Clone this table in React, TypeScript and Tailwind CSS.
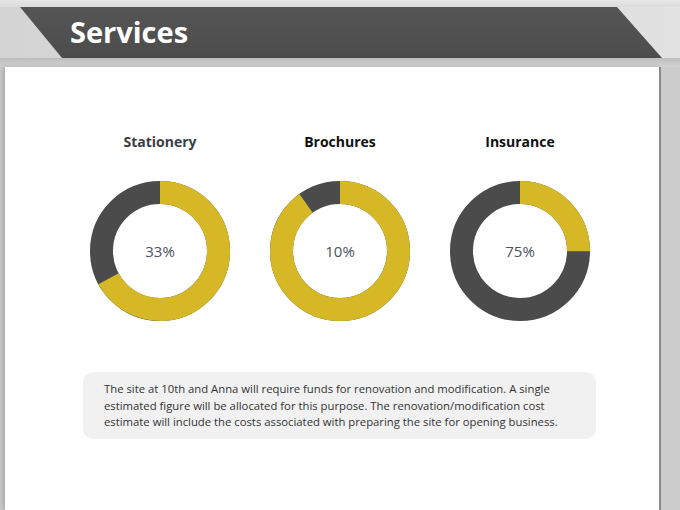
import React from 'react';

const services = [
  { name: 'Stationery', pct: 33, titleColor: 'text-[#3b3e46]' },
  { name: 'Brochures', pct: 10, titleColor: 'text-[#111111]' },
  { name: 'Insurance', pct: 75, titleColor: 'text-[#111111]' },
];

function Donut({ pct }: { pct: number }) {
  const r = 58.5;
  const c = 2 * Math.PI * r;
  const yellow = ((100 - pct) / 100) * c;
  return (
    <div className="relative w-[142px] h-[142px]">
      <svg width="142" height="142" viewBox="0 0 142 142" className="block">
        <g transform="rotate(-90 71 71)">
          <circle cx="71" cy="71" r={r} fill="none" stroke="#4b4b4b" strokeWidth="23" />
          <circle
            cx="71"
            cy="71"
            r={r}
            fill="none"
            stroke="#d6b827"
            strokeWidth="23"
            strokeDasharray={`${yellow} ${c}`}
          />
        </g>
      </svg>
      <div className="absolute inset-0 flex items-center justify-center text-[15px] text-[#4b5262]">
        {pct}%
      </div>
    </div>
  );
}

export default function App() {
  return (
    <div
      className="w-[680px] h-[510px] overflow-hidden flex flex-col bg-[#d6d6d6]"
      style={{ fontFamily: '"Open Sans", "Noto Sans", sans-serif' }}
    >
      <div className="h-[7px] shrink-0 bg-gradient-to-b from-[#e6e6e6] to-[#dcdcdc]" />
      <div className="h-[51px] shrink-0 flex bg-gradient-to-r from-[#d4d4d4] to-[#e2e2e2]">
        <div className="ml-[20px] w-[642px] h-full bg-gradient-to-b from-[#555555] to-[#4c4c4c] [clip-path:polygon(0_0,597px_0,100%_100%,42px_100%)] flex items-center pl-[50px]">
          <h1 className="text-white font-bold text-[29px] leading-none -mt-[3px]">Services</h1>
        </div>
      </div>
      <div className="h-[9px] shrink-0 bg-gradient-to-b from-[#bdbdbd] to-[#d2d2d2]" />
      <div className="flex flex-1 bg-[#cccccc]">
        <div className="ml-[5px] w-[656px] bg-white border-r-2 border-[#8a8a8a] shadow-[-3px_0_4px_rgba(0,0,0,0.15)] flex flex-col">
          <div className="grid grid-cols-3 w-[540px] ml-[65px] mt-[65px]">
            {services.map((s) => (
              <div key={s.name} className="flex flex-col items-center">
                <h2 className={`font-bold text-[14px] leading-[20px] ${s.titleColor}`}>{s.name}</h2>
                <div className="mt-[28px]">
                  <Donut pct={s.pct} />
                </div>
              </div>
            ))}
          </div>
          <div className="ml-[78px] mt-[50px] w-[513px] h-[67px] rounded-[10px] bg-[#f1f1f1] pl-[21px] pt-[9px] text-[11.3px] leading-[16.5px] text-[#333333] whitespace-nowrap">
            <p>
              The site at 10th and Anna will require funds for renovation and modification. A single
              <br />
              estimated figure will be allocated for this purpose. The renovation/modification cost
              <br />
              estimate will include the costs associated with preparing the site for opening business.
            </p>
          </div>
        </div>
      </div>
    </div>
  );
}
